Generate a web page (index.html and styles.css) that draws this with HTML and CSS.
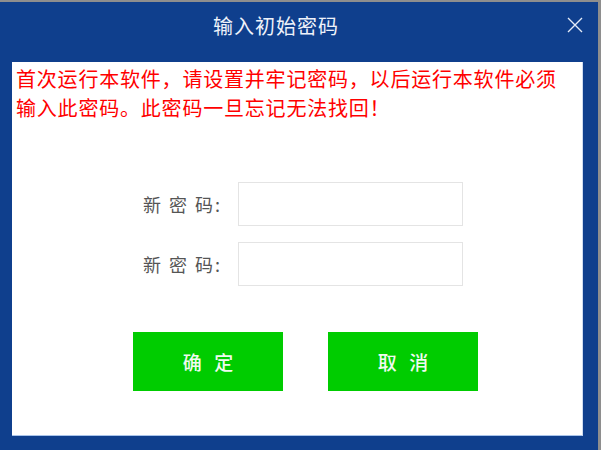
FILE: index.html
```html
<!DOCTYPE html>
<html lang="zh-CN">
<head>
<meta charset="utf-8">
<title>输入初始密码</title>
<link rel="stylesheet" href="styles.css">
</head>
<body>
<div class="window">
  <div class="titlebar">
    <div class="title">输入初始密码</div>
    <div class="close" aria-label="关闭">
      <svg width="16" height="16" viewBox="0 0 16 16"><path d="M1 1 L15 15 M15 1 L1 15" stroke="#e4ebf7" stroke-width="1.4" fill="none"/></svg>
    </div>
  </div>
  <div class="content">
    <p class="notice">首次运行本软件，请设置并牢记密码，以后运行本软件必须输入此密码。此密码一旦忘记无法找回！</p>
    <div class="form">
      <div class="row">
        <label class="label">新 密 码:</label>
        <input class="field" type="password">
      </div>
      <div class="row">
        <label class="label">新 密 码:</label>
        <input class="field" type="password">
      </div>
    </div>
    <div class="actions">
      <button class="btn">确 定</button>
      <button class="btn">取 消</button>
    </div>
  </div>
</div>
</body>
</html>
```
FILE: styles.css
```css
* { box-sizing: border-box; }
html, body {
  margin: 0;
  padding: 0;
  background: #0f3f8d;
}
body {
  font-family: "Noto Sans CJK SC", "Noto Sans", sans-serif;
}
.window {
  width: 601px;
  height: 450px;
  background: #0f3f8d;
  border-top: 2px solid #8e8e8e;
  border-right: 3px solid #8e8e8e;
  display: flex;
  flex-direction: column;
}
.titlebar {
  height: 60px;
  display: flex;
  align-items: flex-start;
  padding-left: 213px;
}
.title {
  flex: 1;
  color: #eef2fa;
  font-size: 20px;
  letter-spacing: 1px;
  line-height: 24px;
  margin-top: 12px;
}
.close {
  width: 16px;
  height: 16px;
  margin-top: 15px;
  margin-right: 15px;
}
.close svg { display: block; }
.content {
  height: 374px;
  margin: 0 15px 0 12px;
  background: #fff;
  border-right: 1px solid #cfdcf0;
  border-bottom: 1px solid #a9c4ea;
  display: flex;
  flex-direction: column;
}
.notice {
  margin: 0;
  padding: 2px 14px 0 4px;
  color: #ff0000;
  font-size: 20px;
  letter-spacing: 0.8px;
  line-height: 29px;
}
.form {
  margin-top: 60px;
  margin-left: 131px;
  display: flex;
  flex-direction: column;
  gap: 16px;
}
.row {
  display: flex;
  align-items: center;
}
.label {
  width: 95px;
  color: #555;
  font-size: 18px;
  letter-spacing: 2px;
}
.field {
  width: 225px;
  height: 44px;
  border: 1px solid #e4e4e4;
  background: #fff;
  outline: none;
  margin: 0;
}
.actions {
  margin-top: 46px;
  margin-left: 121px;
  display: flex;
  gap: 45px;
}
.btn {
  width: 150px;
  height: 59px;
  border: none;
  background: #00cc00;
  color: #f0faf0;
  font-family: "Noto Sans CJK SC", "Noto Sans", sans-serif;
  font-size: 19px;
  font-weight: 500;
  letter-spacing: 4px;
  padding: 0 0 0 4px;
  cursor: pointer;
}
```
